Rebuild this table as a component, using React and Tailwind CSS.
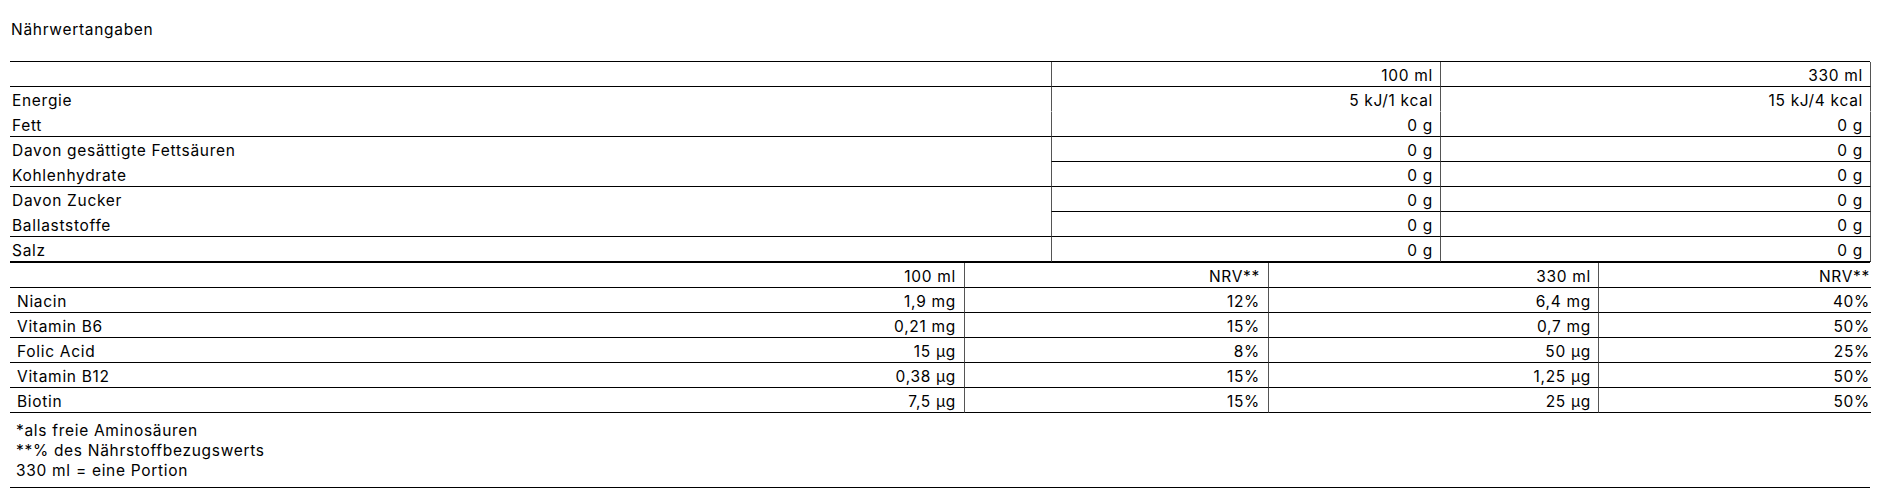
import clsx from "clsx";

const energy = [
    { label: "Energie", a: "5 kJ/1 kcal", b: "15 kJ/4 kcal", left: false, right: false },
    { label: "Fett", a: "0 g", b: "0 g", left: true, right: true },
    { label: "Davon gesättigte Fettsäuren", a: "0 g", b: "0 g", left: false, right: true },
    { label: "Kohlenhydrate", a: "0 g", b: "0 g", left: true, right: true },
    { label: "Davon Zucker", a: "0 g", b: "0 g", left: false, right: true },
    { label: "Ballaststoffe", a: "0 g", b: "0 g", left: true, right: true },
    { label: "Salz", a: "0 g", b: "0 g", left: true, right: true },
];

const vitamins = [
    { label: "Niacin", a: "1,9 mg", an: "12%", b: "6,4 mg", bn: "40%" },
    { label: "Vitamin B6", a: "0,21 mg", an: "15%", b: "0,7 mg", bn: "50%" },
    { label: "Folic Acid", a: "15 µg", an: "8%", b: "50 µg", bn: "25%" },
    { label: "Vitamin B12", a: "0,38 µg", an: "15%", b: "1,25 µg", bn: "50%" },
    { label: "Biotin", a: "7,5 µg", an: "15%", b: "25 µg", bn: "50%" },
];

const cell = "h-[25px] flex items-end pb-[1px] border-b";

function EnergyRow({ label, a, b, left, right }) {
    return (
        <>
            <div className={clsx(cell, "pl-[2px]", left ? "border-b-black" : "border-b-transparent")}>
                {label}
            </div>
            <div
                className={clsx(
                    cell,
                    "justify-end pr-[7px] border-l border-l-[#555]",
                    right ? "border-b-black" : "border-b-transparent"
                )}
            >
                {a}
            </div>
            <div
                className={clsx(
                    cell,
                    "justify-end pr-[7px] border-l border-l-[#555] border-r border-r-[#555]",
                    right ? "border-b-black" : "border-b-transparent"
                )}
            >
                {b}
            </div>
        </>
    );
}

function VitaminRow({ label, a, an, b, bn }) {
    return (
        <>
            <div className={clsx(cell, "justify-between pl-[7px] pr-[8px] border-b-black")}>
                <span>{label}</span>
                <span>{a}</span>
            </div>
            <div className={clsx(cell, "justify-end pr-[8px] border-l border-l-[#555] border-b-black")}>{an}</div>
            <div className={clsx(cell, "justify-end pr-[7px] border-l border-l-[#555] border-b-black")}>{b}</div>
            <div className={clsx(cell, "justify-end pr-[1px] border-l border-l-[#555] border-b-black")}>{bn}</div>
        </>
    );
}

export default function App() {
    return (
        <div className="min-h-[500px] bg-white text-black font-['Inter',sans-serif] text-[15.5px] leading-[18px] tracking-[0.7px]">
            <div className="pt-[21px] pl-[11px]">Nährwertangaben</div>

            <div className="mt-[22px] mx-[10px]">
                <div className="grid grid-cols-[1041px_389px_431px] border-t border-t-black">
                    <EnergyRow label="" a="100 ml" b="330 ml" left right />
                    {energy.map((row) => (
                        <EnergyRow key={row.label} {...row} />
                    ))}
                </div>

                <div className="grid grid-cols-[954px_304px_330px_273px] border-t border-t-black">
                    <VitaminRow label="" a="100 ml" an="NRV**" b="330 ml" bn="NRV**" />
                    {vitamins.map((row) => (
                        <VitaminRow key={row.label} {...row} />
                    ))}
                </div>

                <div className="pt-[8px] pb-[6px] pl-[6px] leading-[20px] border-b border-b-black">
                    <div>*als freie Aminosäuren</div>
                    <div>**% des Nährstoffbezugswerts</div>
                    <div>330 ml = eine Portion</div>
                </div>
            </div>
        </div>
    );
}
